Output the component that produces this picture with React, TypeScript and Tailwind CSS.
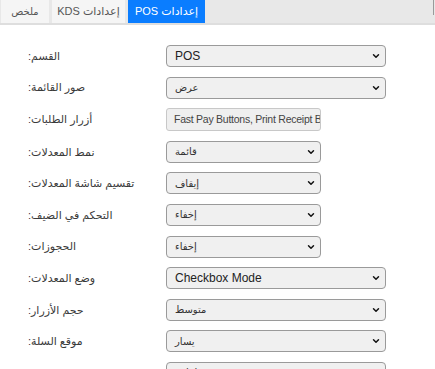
import { ChevronDown } from "lucide-react";

type Row = {
  label: string;
  value: string;
  wide: boolean;
  latin?: boolean;
  input?: boolean;
};

const rows: Row[] = [
  { label: "القسم:", value: "POS", wide: true, latin: true },
  { label: "صور القائمة:", value: "عرض", wide: true },
  { label: "أزرار الطلبات:", value: "Fast Pay Buttons, Print Receipt Button", wide: false, latin: true, input: true },
  { label: "نمط المعدلات:", value: "قائمة", wide: false },
  { label: "تقسيم شاشة المعدلات:", value: "إيقاف", wide: false },
  { label: "التحكم في الضيف:", value: "إخفاء", wide: false },
  { label: "الحجوزات:", value: "إخفاء", wide: false },
  { label: "وضع المعدلات:", value: "Checkbox Mode", wide: true, latin: true },
  { label: "حجم الأزرار:", value: "متوسط", wide: true },
  { label: "موقع السلة:", value: "يسار", wide: true },
  { label: "عرض الفئات:", value: "تلقائي", wide: true },
];

function Field({ row }: { row: Row }) {
  const width = row.wide ? "w-[220px]" : "w-[155px]";

  if (row.input) {
    return (
      <div
        className={`${width} h-[23px] flex items-center overflow-hidden whitespace-nowrap rounded-[3px] border border-[#c8c8c8] bg-[#efefef] pl-[7px] text-[10.5px] tracking-[-0.25px] text-[#444]`}
      >
        {row.value}
      </div>
    );
  }

  const text = row.latin
    ? "text-[12px] text-[#222]"
    : "text-[10px] text-[#333]";

  return (
    <div
      className={`${width} relative h-[22px] flex items-center rounded-[4px] border border-[#9a9a9a] bg-[#f0f0f0] pl-[8px] ${text}`}
    >
      <span dir={row.latin ? "ltr" : "rtl"}>{row.value}</span>
      <ChevronDown className="absolute right-[4px] top-[5px] h-[10px] w-[10px] text-[#111]" strokeWidth={3.5} />
    </div>
  );
}

export default function App() {
  return (
    <div className="w-[435px] h-[369px] overflow-hidden bg-white font-['Liberation_Sans','DejaVu_Sans',sans-serif]">
      {/* Tabs */}
      <div className="relative flex h-[25px] items-start gap-[3px] border-b-[2px] border-[#dedede] bg-[#e8e8e8] pl-[1px]">
        <div className="flex h-[23px] w-[48px] items-center justify-center bg-[#f5f5f5] text-[10px] text-[#555]" dir="rtl">
          ملخص
        </div>
        <div className="flex h-[23px] w-[73px] items-center justify-center bg-[#f5f5f5] text-[11px] text-[#555]" dir="rtl">
          إعدادات KDS
        </div>
        <div className="flex h-[23px] w-[77px] items-center justify-center bg-[#0a7dff] text-[11px] text-white" dir="rtl">
          إعدادات POS
        </div>
        <div className="absolute right-[1px] top-0 h-[15px] w-px bg-[#9a9a9a]" />
      </div>

      {/* Settings */}
      <div className="flex flex-col gap-[9.6px] pl-[28px] pt-[20px]">
        {rows.map((row, i) => (
          <div key={i} className="flex items-center">
            <div className="w-[138px] text-[11px] text-[#3a3a3a]">
              <span dir="rtl" className="inline-block">
                {row.label}
              </span>
            </div>
            <Field row={row} />
          </div>
        ))}
      </div>
    </div>
  );
}
